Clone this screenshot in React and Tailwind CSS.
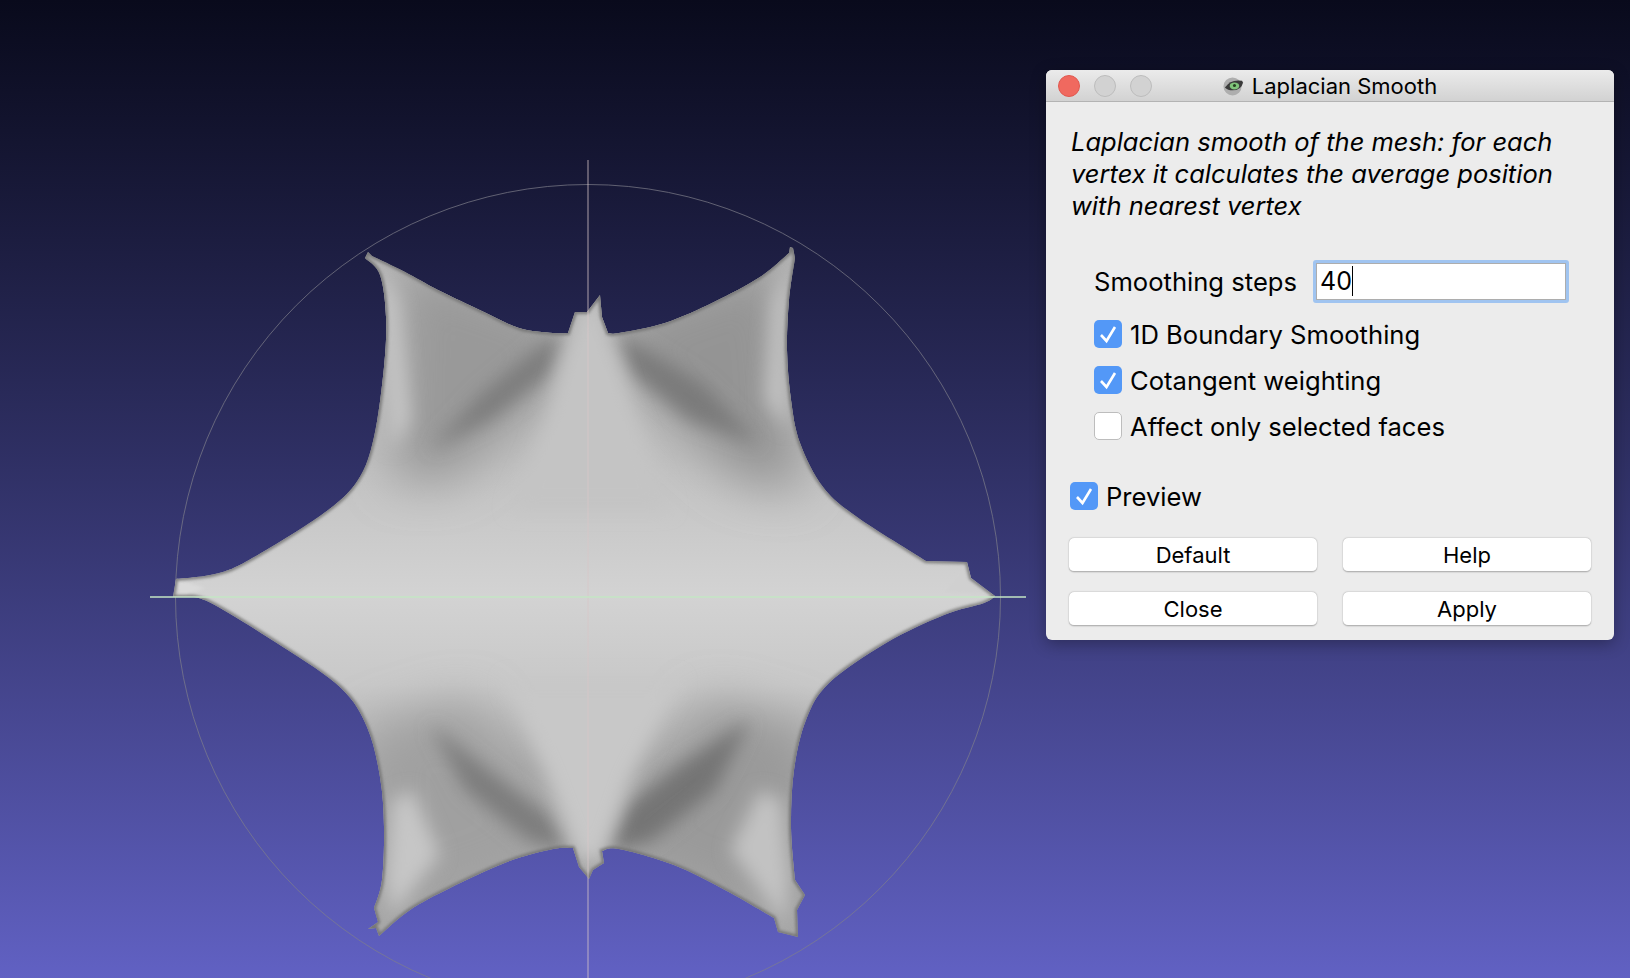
import React from 'react';

// catmull-rom through the points, so the mesh edges curve between its sharp tips
const spline = (pts) => {
  let d = '';
  for (let i = 0; i < pts.length - 1; i++) {
    const p0 = pts[i - 1] || pts[i];
    const p1 = pts[i];
    const p2 = pts[i + 1];
    const p3 = pts[i + 2] || p2;
    const c1 = [p1[0] + (p2[0] - p0[0]) / 6, p1[1] + (p2[1] - p0[1]) / 6];
    const c2 = [p2[0] - (p3[0] - p1[0]) / 6, p2[1] - (p3[1] - p1[1]) / 6];
    d += ` C${c1[0]} ${c1[1]} ${c2[0]} ${c2[1]} ${p2[0]} ${p2[1]}`;
  }
  return d;
};

const MESH = [
  'M368 252 L372 256',
  spline([[372, 256], [405, 272], [438, 290], [484, 312], [519, 328], [553, 333], [568, 333]]),
  'L575 312 L587 312 L600 295 L602 317 L608 333',
  spline([[608, 333], [619, 333], [665, 323], [714, 302], [760, 277], [789, 253]]),
  'L790 247 L793 248 L795 258',
  spline([[795, 258], [789, 300], [787, 350], [791, 400], [800, 443], [823, 487], [857, 517], [926, 561]]),
  'L967 562 L971 578 L995 596',
  spline([[995, 596], [984, 603], [944, 615], [886, 643], [829, 683], [806, 720], [794, 770], [791, 827], [795, 880]]),
  'L805 895 L797 910 L798 937 L778 932 L774 918',
  spline([[774, 918], [725, 890], [674, 865], [619, 849], [602, 851]]),
  'L604 863 L593 870 L589 879 L579 867 L573 848',
  spline([[573, 848], [553, 849], [507, 862], [450, 888], [410, 910], [379, 936]]),
  'L376 928 L368 929 L378 922 L374 908',
  spline([[374, 908], [382, 880], [384, 827], [380, 777], [367, 727], [341, 688], [283, 647], [209, 602], [183, 597]]),
  'L173 597 L176 579',
  spline([[176, 579], [215, 574], [249, 560], [324, 513], [358, 480], [374, 437], [384, 367], [386, 317], [380, 275], [365, 258]]),
  'Z',
].join(' ');

// midtones first, then creases, then the lighter folds on top
const SHADES = [
  { d: 'M400 260 L575 320 L545 400 L450 480 L395 480 Z', fill: '#999999', blur: 'url(#blurL)' },
  { d: 'M780 260 L605 320 L650 400 L740 480 L800 490 Z', fill: '#949494', blur: 'url(#blurL)' },
  { d: 'M370 730 L470 700 L570 850 L500 880 L380 920 Z', fill: '#a0a0a0', blur: 'url(#blurL)' },
  { d: 'M810 730 L710 700 L610 850 L680 880 L800 920 Z', fill: '#9a9a9a', blur: 'url(#blurL)' },
  { d: 'M564 335 L548 375 L490 420 L430 450 L480 395 L540 345 Z', fill: '#7d7d7d', blur: 'url(#blurM)' },
  { d: 'M616 335 L634 375 L690 420 L760 445 L705 385 L640 345 Z', fill: '#7a7a7a', blur: 'url(#blurM)' },
  { d: 'M570 852 L548 815 L495 775 L430 725 L465 790 L530 842 Z', fill: '#7d7d7d', blur: 'url(#blurM)' },
  { d: 'M606 852 L628 805 L680 765 L750 720 L715 790 L650 842 Z', fill: '#757575', blur: 'url(#blurM)' },
  { d: 'M378 265 L398 300 L410 420 L392 450 L386 380 Z', fill: '#c6c6c6', blur: 'url(#blurM)' },
  { d: 'M790 265 L772 300 L765 400 L788 430 L788 350 Z', fill: '#c2c2c2', blur: 'url(#blurM)' },
  { d: 'M392 800 L412 790 L440 855 L392 915 L385 880 Z', fill: '#c6c6c6', blur: 'url(#blurM)' },
  { d: 'M782 800 L760 790 L730 850 L785 925 L790 880 Z', fill: '#c2c2c2', blur: 'url(#blurM)' },
  { d: 'M578 312 L598 298 L612 345 L635 415 L670 510 L510 510 L548 415 L565 350 Z', fill: '#c4c4c4', blur: 'url(#blurM)' },
  { d: 'M505 680 L680 680 L630 780 L602 860 L578 860 L548 780 Z', fill: '#c8c8c8', blur: 'url(#blurM)' },
];

function MeshView() {
  return (
    <svg className="absolute inset-0" width="1630" height="978" viewBox="0 0 1630 978" fill="none">
      <defs>
        <clipPath id="meshClip">
          <path d={MESH} />
        </clipPath>
        <linearGradient id="meshBase" x1="0" y1="250" x2="0" y2="940" gradientUnits="userSpaceOnUse">
          <stop offset="0" stopColor="#b4b4b4" />
          <stop offset="0.3" stopColor="#c0c0c0" />
          <stop offset="0.5" stopColor="#d3d3d3" />
          <stop offset="0.63" stopColor="#c8c8c8" />
          <stop offset="0.75" stopColor="#ababab" />
          <stop offset="1" stopColor="#a8a8a8" />
        </linearGradient>
        <filter id="blurM" filterUnits="userSpaceOnUse" x="0" y="0" width="1630" height="978">
          <feGaussianBlur stdDeviation="9" />
        </filter>
        <filter id="blurL" filterUnits="userSpaceOnUse" x="0" y="0" width="1630" height="978">
          <feGaussianBlur stdDeviation="24" />
        </filter>
        <filter id="blurEdge" filterUnits="userSpaceOnUse" x="0" y="0" width="1630" height="978">
          <feGaussianBlur stdDeviation="1.5" />
        </filter>
      </defs>

      <circle cx="588" cy="597" r="412.5" stroke="#7f7f8a" strokeOpacity="0.7" strokeWidth="1" />

      <g clipPath="url(#meshClip)">
        <rect x="160" y="240" width="850" height="710" fill="url(#meshBase)" />
        {SHADES.map((s, i) => (
          <path key={i} d={s.d} fill={s.fill} filter={s.blur} />
        ))}
        <path d="M176 579 L205 588 L180 597 Z" fill="#dadada" filter="url(#blurEdge)" />
        <path d="M967 562 L971 578 L985 594 L945 592 Z" fill="#d0d0d0" filter="url(#blurEdge)" />
        <path d={MESH} stroke="#6e6e6e" strokeOpacity="0.85" strokeWidth="4" filter="url(#blurEdge)" />
      </g>

      <path d="M588 160 V978" stroke="#d9c6c8" strokeOpacity="0.65" strokeWidth="1.2" />
      <path d="M150 597 H1026" stroke="#c4e6c4" strokeWidth="1.5" />
    </svg>
  );
}

function EyeIcon() {
  return (
    <svg width="21" height="21" viewBox="0 0 22 22" className="mr-[8px]">
      <circle cx="10" cy="12" r="9.5" fill="#aeaeae" />
      <path d="M2 13 Q8 4 20 6 L21 8 Q19 16 10 16 Q5 16 2 13 Z" fill="#3a3a3a" />
      <ellipse cx="12" cy="11.5" rx="5" ry="3.6" fill="#7fc47a" />
      <circle cx="12" cy="11" r="1.6" fill="#26401f" />
    </svg>
  );
}

function Check({ checked, label, className = '' }) {
  return (
    <div className={`flex items-center h-[28px] ${className}`}>
      {checked ? (
        <span className="flex w-[28px] h-[28px] rounded-[5px] bg-[#5398f7]">
          <svg width="28" height="28" viewBox="0 0 28 28" fill="none">
            <path d="M7 15 L12.5 21 L21 7" stroke="white" strokeWidth="2.6" />
          </svg>
        </span>
      ) : (
        <span className="w-[28px] h-[28px] rounded-[5px] bg-white border border-[#bdbdbd]" />
      )}
      <span className="ml-[8px] pt-[4px] text-[25.6px] text-black">{label}</span>
    </div>
  );
}

function Btn({ children }) {
  return (
    <button className="h-[34px] w-[248px] rounded-[5px] bg-white border-b border-[#b5b5b5] shadow-[0_0_1.5px_rgba(0,0,0,0.4)] text-[22px] leading-none text-black">
      {children}
    </button>
  );
}

export default function App() {
  return (
    <div className="relative flex justify-end w-[1630px] h-[978px] overflow-hidden pt-[70px] pr-[16px] bg-linear-to-b from-[#090a1c] to-[#6161c3] font-['Inter',sans-serif]">
      <MeshView />

      <div className="relative w-[568px] h-[570px] rounded-[6px] bg-[#ececec] overflow-hidden shadow-[0_4px_16px_rgba(0,0,0,0.3)]">
        <div className="relative flex items-center justify-center h-[32px] border-b border-[#b3b3b3] bg-linear-to-b from-[#ebebeb] to-[#d2d2d2]">
          <div className="absolute left-[12px] top-[5px] flex gap-[14px]">
            <span className="w-[22px] h-[22px] rounded-full bg-[#f0695f] border border-[#e0584f]" />
            <span className="w-[22px] h-[22px] rounded-full bg-[#d2d2d2] border border-[#bcbcbc]" />
            <span className="w-[22px] h-[22px] rounded-full bg-[#d2d2d2] border border-[#bcbcbc]" />
          </div>
          <EyeIcon />
          <span className="text-[22px] leading-none text-black">Laplacian Smooth</span>
        </div>

        <p className="pl-[25px] pt-[23.5px] text-[25.5px] leading-[32px] italic text-black">
          Laplacian smooth of the mesh: for each
          <br />
          vertex it calculates the average position
          <br />
          with nearest vertex
        </p>

        <div className="flex items-center pl-[48px] mt-[38px]">
          <span className="pt-[2px] text-[25.6px] text-black">Smoothing steps</span>
          <div className="flex items-center ml-[16px] w-[256px] h-[43px] pl-[4px] bg-white border-[3.5px] border-[#a0c4f0] rounded-[3px] outline outline-[#adadad] -outline-offset-[4px]">
            <span className="text-[25px] leading-none text-black">40</span>
            <span className="w-[1.5px] h-[30px] bg-black" />
          </div>
        </div>

        <div className="flex flex-col gap-[18px] pl-[48px] mt-[17px]">
          <Check checked label="1D Boundary Smoothing" />
          <Check checked label="Cotangent weighting" />
          <Check label="Affect only selected faces" />
        </div>

        <Check checked label="Preview" className="ml-[24px] mt-[42px]" />

        <div className="grid grid-cols-[248px_248px] gap-x-[26px] gap-y-[20px] pl-[23px] mt-[28.5px]">
          <Btn>Default</Btn>
          <Btn>Help</Btn>
          <Btn>Close</Btn>
          <Btn>Apply</Btn>
        </div>
      </div>
    </div>
  );
}
